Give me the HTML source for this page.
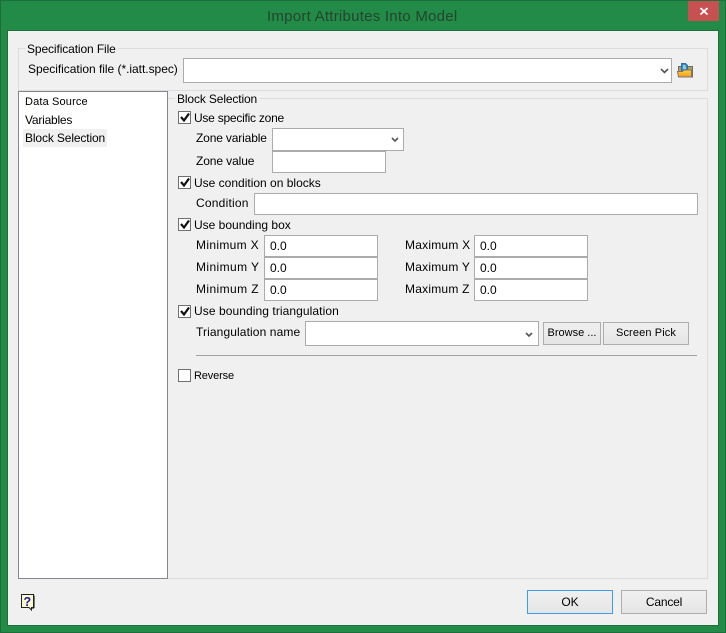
<!DOCTYPE html>
<html><head><meta charset="utf-8">
<style>
html,body{margin:0;padding:0;width:726px;height:633px;overflow:hidden;background:#228b47}
*{box-sizing:border-box}
body{position:relative;font-family:"Liberation Sans",sans-serif;font-size:12px;color:#000}
.a{position:absolute}
.t{position:absolute;white-space:nowrap;line-height:14px;height:14px}
.i{position:absolute;background:#fff;border:1px solid #ababab}
.cb{position:absolute;width:13px;height:13px;background:#fff;border:1px solid #707070}
.btn{position:absolute;border:1px solid #adadad;background:linear-gradient(#f0f0f0,#e5e5e5);text-align:center;white-space:nowrap}
.v{position:absolute;left:0;top:0}
</style></head><body>
<div class="a" style="left:0;top:0;width:726px;height:633px;border:1px solid #1c6e3a"></div>
<div class="t" style="left:267px;top:8px;font-size:15px;line-height:17px;height:17px;color:#24452f;letter-spacing:.25px">Import Attributes Into Model</div>
<div class="a" style="left:688px;top:1px;width:31px;height:20px;background:#c75050"></div>
<svg class="v" width="726" height="633" style="z-index:2"><path d="M700.500 8l7 6.500M707.500 8l-7 6.500" stroke="#fff" stroke-width="1.800" fill="none"/></svg>
<div class="a" style="left:7px;top:30px;width:712px;height:596px;background:#f0f0f0;border:1px solid #1c6e3a"></div>

<div class="a" style="left:18px;top:48px;width:690px;height:43px;border:1px solid #dcdcdc"></div>
<div class="a" style="left:25px;top:44px;width:93px;height:10px;background:#f0f0f0"></div>
<div class="t" style="left:27px;top:42px;letter-spacing:-.11px">Specification File</div>
<div class="t" style="left:28px;top:62px;letter-spacing:-.03px">Specification file (*.iatt.spec)</div>
<div class="i" style="left:183px;top:58px;width:489px;height:25px"></div>

<div class="a" style="left:167px;top:98px;width:541px;height:481px;border:1px solid #dcdcdc"></div>
<div class="a" style="left:175px;top:93px;width:85px;height:10px;background:#f0f0f0"></div>
<div class="t" style="left:177px;top:92px;letter-spacing:-.13px">Block Selection</div>

<div class="a" style="left:18px;top:91px;width:150px;height:488px;background:#fff;border:1px solid #828790"></div>
<div class="a" style="left:23px;top:129px;width:84px;height:18px;background:#f0f0f0"></div>
<div class="t" style="left:25px;top:95px;font-size:11px;letter-spacing:.15px">Data Source</div>
<div class="t" style="left:25px;top:113px;letter-spacing:-.22px">Variables</div>
<div class="t" style="left:25px;top:131px;letter-spacing:-.13px">Block Selection</div>

<div class="cb" style="left:178px;top:111px"></div>
<div class="t" style="left:194px;top:111px;letter-spacing:-.24px">Use specific zone</div>
<div class="t" style="left:196px;top:131px;letter-spacing:-.15px">Zone variable</div>
<div class="i" style="left:272px;top:128px;width:132px;height:23px"></div>
<div class="t" style="left:196px;top:154px;letter-spacing:-.1px">Zone value</div>
<div class="i" style="left:272px;top:151px;width:114px;height:22px"></div>

<div class="cb" style="left:178px;top:176px"></div>
<div class="t" style="left:194px;top:176px">Use condition on blocks</div>
<div class="t" style="left:196px;top:196px;letter-spacing:.22px">Condition</div>
<div class="i" style="left:254px;top:193px;width:444px;height:22px"></div>

<div class="cb" style="left:178px;top:218px"></div>
<div class="t" style="left:194px;top:218px">Use bounding box</div>

<div class="t" style="left:196px;top:238px;letter-spacing:.33px">Minimum X</div>
<div class="i" style="left:264px;top:235px;width:114px;height:22px"></div>
<div class="t" style="left:270px;top:239px">0.0</div>
<div class="t" style="left:196px;top:260px;letter-spacing:.4px">Minimum Y</div>
<div class="i" style="left:264px;top:257px;width:114px;height:22px"></div>
<div class="t" style="left:270px;top:261px">0.0</div>
<div class="t" style="left:196px;top:282px;letter-spacing:.4px">Minimum Z</div>
<div class="i" style="left:264px;top:279px;width:114px;height:22px"></div>
<div class="t" style="left:270px;top:283px">0.0</div>

<div class="t" style="left:405px;top:238px;letter-spacing:.22px">Maximum X</div>
<div class="i" style="left:474px;top:235px;width:114px;height:22px"></div>
<div class="t" style="left:480px;top:239px">0.0</div>
<div class="t" style="left:405px;top:260px;letter-spacing:.22px">Maximum Y</div>
<div class="i" style="left:474px;top:257px;width:114px;height:22px"></div>
<div class="t" style="left:480px;top:261px">0.0</div>
<div class="t" style="left:405px;top:282px;letter-spacing:.22px">Maximum Z</div>
<div class="i" style="left:474px;top:279px;width:114px;height:22px"></div>
<div class="t" style="left:480px;top:283px">0.0</div>

<div class="cb" style="left:178px;top:305px"></div>
<div class="t" style="left:194px;top:304px;letter-spacing:.08px">Use bounding triangulation</div>
<div class="t" style="left:196px;top:325px;letter-spacing:.11px">Triangulation name</div>
<div class="i" style="left:305px;top:321px;width:234px;height:25px"></div>
<div class="btn" style="left:543px;top:322px;width:58px;height:23px;line-height:21px;font-size:11px">Browse ...</div>
<div class="btn" style="left:603px;top:322px;width:86px;height:23px;line-height:21px;font-size:11px;letter-spacing:.12px">Screen Pick</div>
<div class="a" style="left:196px;top:355px;width:501px;height:1px;background:#a0a0a0"></div>
<div class="cb" style="left:178px;top:369px"></div>
<div class="t" style="left:194px;top:369px;font-size:11px;letter-spacing:-.15px">Reverse</div>

<div class="btn" style="left:527px;top:590px;width:86px;height:24px;line-height:22px;border-color:#3c9cf0">OK</div>
<div class="btn" style="left:621px;top:590px;width:86px;height:24px;line-height:22px;letter-spacing:-.2px">Cancel</div>

<svg class="v" width="726" height="633" style="z-index:3">
 <defs>
  <linearGradient id="o" x1="0" y1="0" x2="0" y2="1"><stop offset="0" stop-color="#ffd23c"/><stop offset="1" stop-color="#f79a18"/></linearGradient>
 </defs>
 <g fill="none" stroke="#111" stroke-width="2.2">
  <path d="M181 117l3 3.500 5-7"/><path d="M181 182l3 3.500 5-7"/><path d="M181 224l3 3.500 5-7"/><path d="M181 311l3 3.500 5-7"/>
 </g>
 <g fill="none" stroke="#555" stroke-width="1.600">
  <path d="M661 69l3.500 3.500 3.500-3.500"/><path d="M392 138l3 3 3-3"/><path d="M526 333l3 3 3-3"/>
 </g>
 <!-- folder -->
 <path d="M678.500 66.500h14v10.500h-14z" fill="#b89a55" stroke="#6f6f6f"/>
 <path d="M681.500 63.500h4l2 2v6h-6z" fill="#2f8fc8" stroke="#2a6f9f"/>
 <path d="M683 66h2.500M683 68h3" stroke="#fff"/>
 <path d="M677.500 71.500h5l1.500-1.500h7.500v7h-13z" fill="url(#o)" stroke="#777"/>
 <!-- help -->
 <path d="M21.500 594.500h12v13h-2v2.500l-2.500-2.500h-7.500z" fill="#fbf8d0" stroke="#222"/>
 <path d="M34.500 595.500v12.500M32 608.500h2" stroke="#777"/>
 <text x="23.500" y="606" font-family="Liberation Sans,sans-serif" font-size="12.500" font-weight="bold" fill="#1a1a8c">?</text>
</svg>
</body></html>
